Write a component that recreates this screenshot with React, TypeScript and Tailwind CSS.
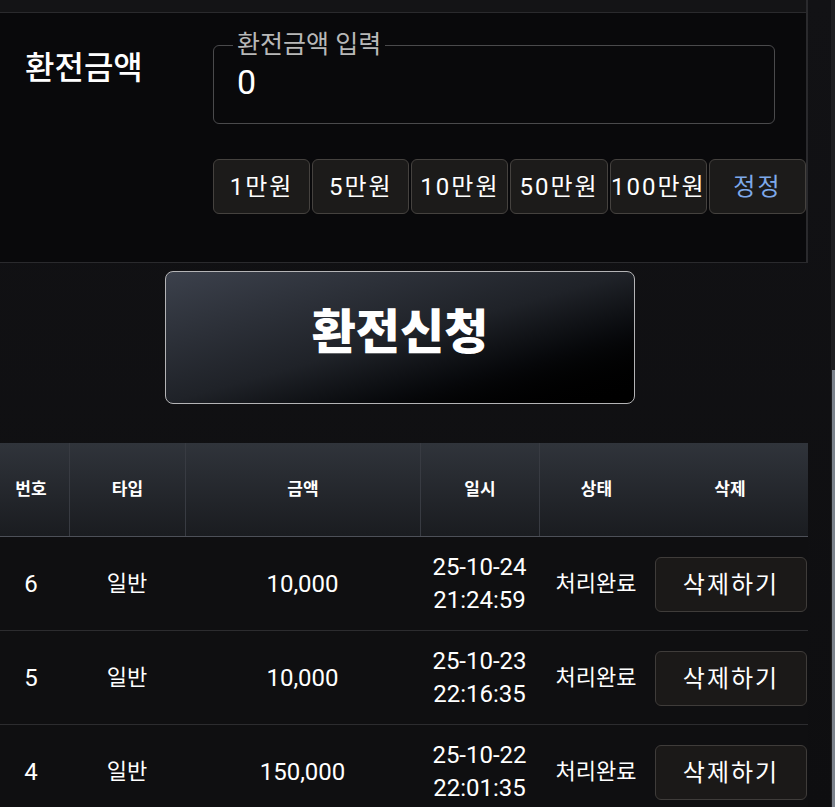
const quickAmounts = ["1만원", "5만원", "10만원", "50만원", "100만원"];

const rows = [
  { no: 6, type: "일반", amount: "10,000", date: "25-10-24", time: "21:24:59", status: "처리완료" },
  { no: 5, type: "일반", amount: "10,000", date: "25-10-23", time: "22:16:35", status: "처리완료" },
  { no: 4, type: "일반", amount: "150,000", date: "25-10-22", time: "22:01:35", status: "처리완료" },
];

// column widths: 69 / 116 / 235 / 119 / 114 / 154
const cols = "grid grid-cols-[69px_116px_235px_119px_114px_154px]";

function QuickButton({ label, accent = false }: { label: string; accent?: boolean }) {
  return (
    <button
      className={`h-[55px] rounded-[6px] border border-[#45423f] bg-[#1c1b1a] text-[24px] leading-none tracking-[2px] ${
        accent ? "text-[#7ea9ea]" : "text-white"
      }`}
    >
      {label}
    </button>
  );
}

export default function App() {
  return (
    <div className="relative w-[835px] h-[807px] overflow-hidden bg-gradient-to-b from-[#121215] to-[#0e0e10] font-['Roboto','Noto_Sans_CJK_KR',sans-serif] text-white">
      <div className="w-[808px]">
        {/* previous panel edge */}
        <div className="h-[13px] bg-[#141416] border-b border-r-2 border-[#2a2a2d]" />

        {/* amount form */}
        <section className="h-[250px] bg-[#09090b] border-r-2 border-b border-[#2a2a2d] flex pl-[25px]">
          <div className="w-[188px] pt-[39px] text-[32px] leading-none font-medium">환전금액</div>

          <div className="flex-1 pt-[20px]">
            <fieldset className="w-[562px] rounded-[6px] border border-[#4a4a4c] pl-[19px]">
              <legend className="px-[4px] text-[25px] leading-[24px] text-[#b8b8b8]">환전금액 입력</legend>
              <div className="h-[66px] pt-[8px] pl-[4px] text-[34px] leading-[34px]">0</div>
            </fieldset>

            <div className="mt-[35px] grid grid-cols-6 gap-[2px]">
              {quickAmounts.map((a) => (
                <QuickButton key={a} label={a} />
              ))}
              <QuickButton label="정정" accent />
            </div>
          </div>
        </section>

        {/* submit */}
        <div className="pt-[8px] pb-[39px] pl-[165px]">
          <button className="w-[470px] h-[133px] pb-[10px] rounded-[8px] border-[1.5px] border-[#b4b4b6] bg-gradient-to-br from-[#3c414c] via-[#1f2228] to-[#000000] text-[48px] font-black leading-none">
            환전신청
          </button>
        </div>

        {/* history table */}
        <div className={`${cols} h-[94px] bg-gradient-to-b from-[#30343b] to-[#1a1c20] border-b border-[#4d5058] text-[17px] font-bold`}>
          {["번호", "타입", "금액", "일시", "상태", "삭제"].map((h, i) => (
            <div
              key={h}
              className={`flex items-center justify-center ${i === 0 ? "pr-[7px]" : ""} ${
                i > 0 && i < 5 ? "border-l border-[#383b42]" : ""
              }`}
            >
              {h}
            </div>
          ))}
        </div>

        {rows.map((r) => (
          <div key={r.no} className={`${cols} h-[94px] bg-[#0f0f11] border-b border-[#2c2c2f] items-center text-center`}>
            <div className="pr-[7px] text-[24px]">{r.no}</div>
            <div className="text-[22px]">{r.type}</div>
            <div className="text-[24px]">{r.amount}</div>
            <div className="text-[24px] leading-[33px]">
              <div>{r.date}</div>
              <div>{r.time}</div>
            </div>
            <div className="text-[22px]">{r.status}</div>
            <div className="pl-[2px] pt-[2px]">
              <button className="w-[152px] h-[55px] rounded-[6px] border border-[#3f3c3a] bg-[#1b1918] text-[24px] tracking-[2px] leading-none">
                삭제하기
              </button>
            </div>
          </div>
        ))}
      </div>

      {/* overlay scrollbar */}
      <div className="absolute right-0 top-0 bottom-0 w-[4px] bg-[#1e1e21]">
        <div className="absolute left-[1px] right-0 top-[370px] bottom-0 bg-[#7b828c]" />
      </div>
    </div>
  );
}
